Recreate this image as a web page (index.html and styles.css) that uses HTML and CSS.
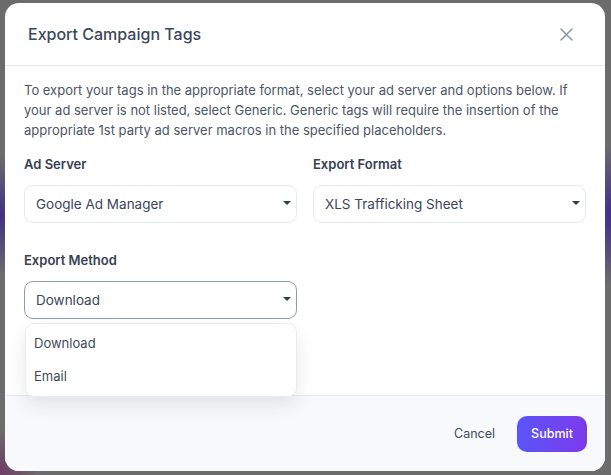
FILE: index.html
```html
<!DOCTYPE html>
<html>
<head>
<meta charset="utf-8">
<link rel="stylesheet" href="styles.css">
</head>
<body>
<div class="backdrop">
  <div class="modal">
    <header class="modal-header">
      <h1 class="modal-title">Export Campaign Tags</h1>
      <button class="close-btn" aria-label="Close">
        <svg width="13" height="13" viewBox="0 0 13 13"><path d="M1 1L12 12M12 1L1 12" stroke="#8a96a8" stroke-width="1.5" stroke-linecap="round"/></svg>
      </button>
    </header>
    <div class="modal-body">
      <p class="intro">To export your tags in the appropriate format, select your ad server and options below. If your ad server is not listed, select Generic. Generic tags will require the insertion of the appropriate 1st party ad server macros in the specified placeholders.</p>
      <div class="grid">
        <div class="field">
          <label class="label">Ad Server</label>
          <div class="select"><span>Google Ad Manager</span><i class="caret"></i></div>
        </div>
        <div class="field">
          <label class="label">Export Format</label>
          <div class="select"><span>XLS Trafficking Sheet</span><i class="caret"></i></div>
        </div>
        <div class="field method">
          <label class="label">Export Method</label>
          <div class="select focused"><span>Download</span><i class="caret"></i></div>
          <ul class="menu">
            <li>Download</li>
            <li>Email</li>
          </ul>
        </div>
      </div>
    </div>
    <footer class="modal-footer">
      <button class="btn-cancel">Cancel</button>
      <button class="btn-submit">Submit</button>
    </footer>
  </div>
</div>
</body>
</html>
```

FILE: styles.css
```css
* { box-sizing: border-box; }
html, body { margin: 0; padding: 0; }
body {
  width: 611px;
  height: 475px;
  overflow: hidden;
  font-family: Inter, "Noto Sans", sans-serif;
}
.backdrop {
  width: 611px;
  height: 475px;
  padding: 3px 6px 4px 5px;
  background:
    radial-gradient(ellipse 30px 60px at 0px 215px, rgba(60,40,140,0.9), rgba(60,40,140,0) 100%),
    radial-gradient(ellipse 30px 70px at 611px 215px, rgba(60,40,140,0.9), rgba(60,40,140,0) 100%),
    radial-gradient(ellipse 40px 40px at 0px 470px, rgba(110,50,100,0.8), rgba(110,50,100,0) 100%),
    #6c6c6c;
}
.modal {
  width: 600px;
  height: 468px;
  background: #fff;
  border-radius: 14px;
  display: flex;
  flex-direction: column;
  overflow: hidden;
  position: relative;
}
.modal-header {
  height: 63px;
  flex: none;
  display: flex;
  align-items: center;
  justify-content: space-between;
  padding: 0 32px 0 23px;
  border-bottom: 1px solid #e5eaf1;
}
.modal-title {
  margin: 0;
  font-size: 16px;
  font-weight: 500;
  color: #3b475a;
}
.close-btn {
  border: 0;
  background: none;
  padding: 0;
  width: 13px;
  height: 13px;
  display: flex;
}
.modal-body {
  flex: 1;
  padding: 14px 19px 0 19px;
  position: relative;
}
.intro {
  margin: 0;
  font-size: 13px;
  line-height: 20px;
  color: #4b5668;
}
.grid {
  margin-top: 14px;
  display: grid;
  grid-template-columns: 273px 273px;
  column-gap: 16px;
  row-gap: 27px;
}
.field { position: relative; }
.label {
  display: block;
  font-size: 13px;
  line-height: 20px;
  font-weight: 600;
  color: #364153;
  margin-bottom: 11px;
}
.select {
  height: 38px;
  border: 1px solid #e3e8ef;
  border-radius: 9px;
  display: flex;
  align-items: center;
  justify-content: space-between;
  padding: 0 5px 0 11px;
  font-size: 13.5px;
  color: #3b4658;
}
.select.focused {
  border-color: #8f9bb0;
}
.caret {
  width: 0;
  height: 0;
  border-left: 4px solid transparent;
  border-right: 4px solid transparent;
  border-top: 4px solid #2f3a4b;
  margin-top: -2px;
}
.menu {
  position: absolute;
  left: 1px;
  right: 0;
  top: 73px;
  height: 74px;
  margin: 0;
  padding: 2px 0 4px;
  list-style: none;
  background: #fff;
  border: 1px solid #e8ecf2;
  border-radius: 9px;
  box-shadow: 0 8px 18px rgba(30,40,60,0.10);
  z-index: 5;
}
.menu li {
  height: 33px;
  display: flex;
  align-items: center;
  padding-left: 8px;
  font-size: 13px;
  color: #3f4a5c;
}
.modal-footer {
  height: 76px;
  flex: none;
  background: #f8f9fb;
  border-top: 1px solid #e8ecf2;
  display: flex;
  align-items: center;
  justify-content: flex-end;
  padding: 0 18px 0 0;
  gap: 22px;
}
.btn-cancel {
  border: 0;
  background: none;
  padding: 0;
  font-family: inherit;
  font-size: 12.5px;
  color: #3f4a5c;
}
.btn-submit {
  width: 70px;
  height: 36px;
  border: 0;
  border-radius: 10px;
  background: linear-gradient(90deg, #5a55f7, #7c3aed);
  color: #fff;
  font-family: inherit;
  font-size: 12.5px;
  font-weight: 500;
}
```
